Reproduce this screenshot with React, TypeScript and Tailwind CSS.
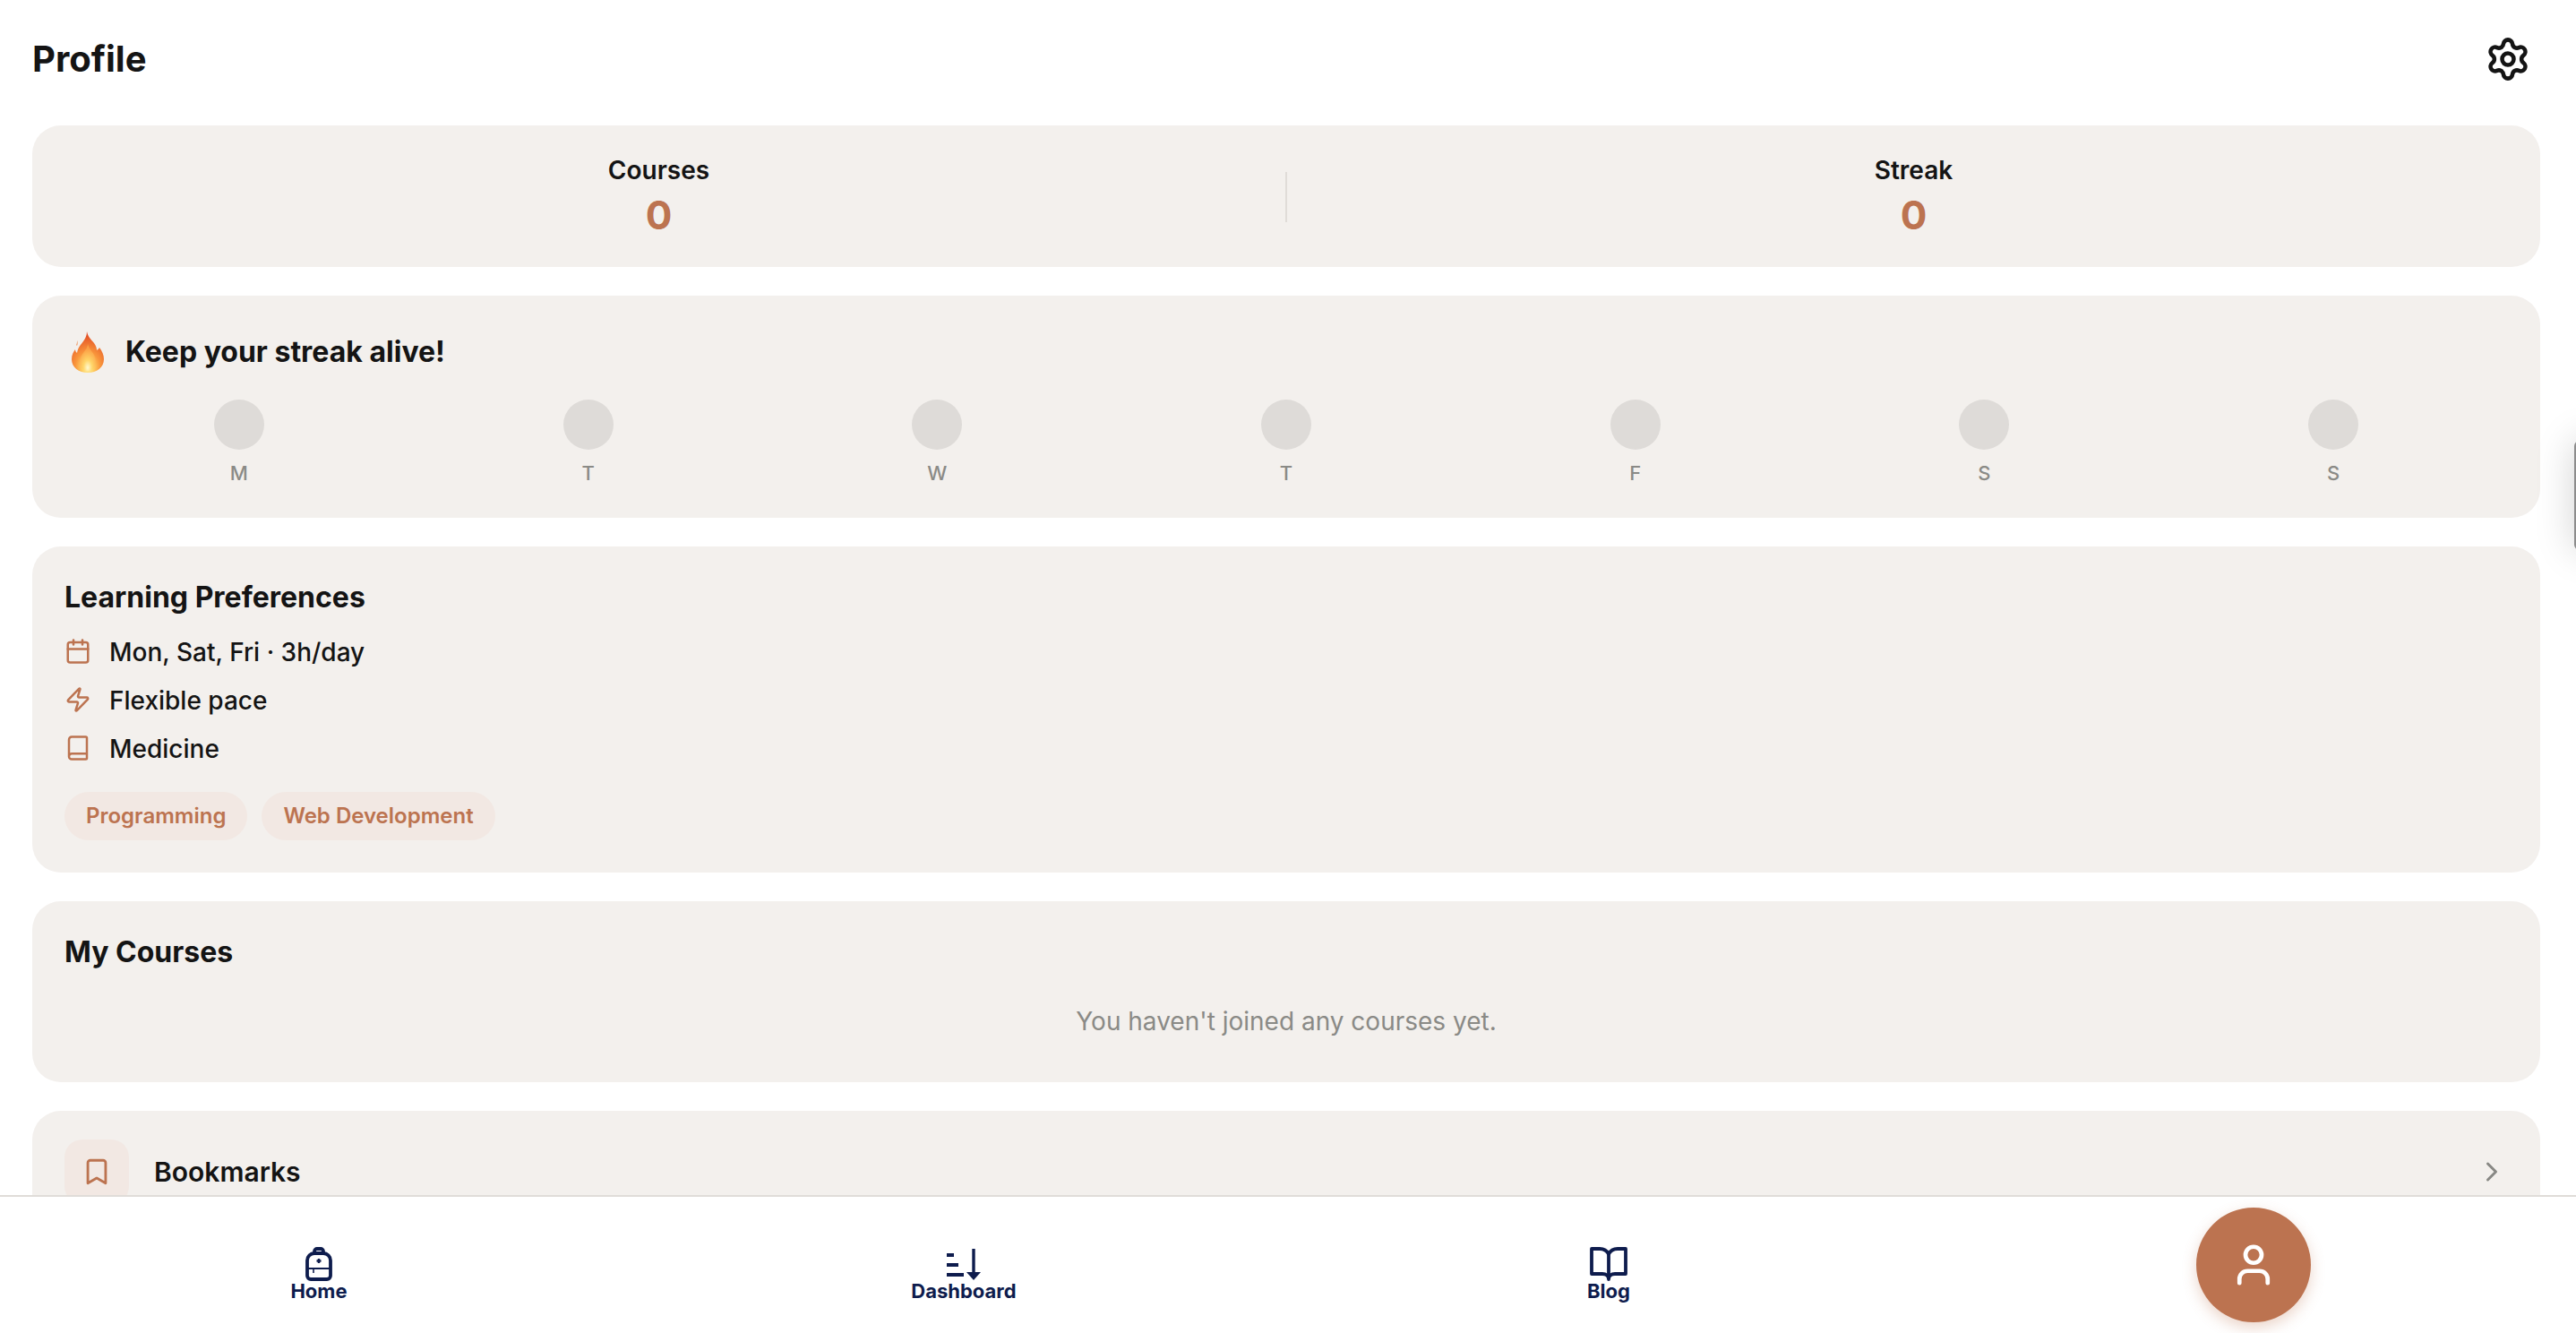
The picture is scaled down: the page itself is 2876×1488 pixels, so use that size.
import { Book, Bookmark, Calendar, ChevronRight, Settings, User, Zap } from "lucide-react"

const days = ["M", "T", "W", "T", "F", "S", "S"]

function Flame() {
  return (
    <svg viewBox="0 0 36 46" className="h-[46px] w-[36px] shrink-0">
      <defs>
        <radialGradient id="flame" cx="50%" cy="88%" r="80%">
          <stop offset="0%" stopColor="#fff6b8" />
          <stop offset="20%" stopColor="#ffd568" />
          <stop offset="48%" stopColor="#f9973c" />
          <stop offset="100%" stopColor="#e34f26" />
        </radialGradient>
        <radialGradient id="flameInner" cx="50%" cy="88%" r="70%">
          <stop offset="0%" stopColor="#fff9cf" />
          <stop offset="40%" stopColor="#ffd568" />
          <stop offset="100%" stopColor="#fb9f45" />
        </radialGradient>
      </defs>
      <path
        d="M17 0c1 6 5 9 8 13 2 3 3 5 3 8 2-1 3-3 3-3 3 4 5 8 5 13 0 9-8 15-18 15S0 40 0 31c0-5 2-8 4-11 0 2 1 3 2 4 1-6 4-9 7-13 2-3 4-6 4-11z"
        fill="url(#flame)"
      />
      <path d="M18 14c1 5 5 8 7 12 1 3 2 5 2 8 0 6-4 10-9 10s-9-4-9-10c0-4 2-7 4-10 2-3 5-6 5-10z" fill="url(#flameInner)" />
      <path d="M5 15c1-2 1-3 1-5 1 2 1 4 0 6z" fill="#f0a070" />
    </svg>
  )
}

function Backpack() {
  return (
    <svg viewBox="0 0 30 38" className="h-[38px] w-[30px]" fill="none" stroke="#0e1c4d" strokeWidth="3.8">
      <path d="M10 7V5a3 3 0 0 1 3-3h4a3 3 0 0 1 3 3v2" />
      <path d="M2 15a8 8 0 0 1 8-8h10a8 8 0 0 1 8 8v17a4 4 0 0 1-4 4H6a4 4 0 0 1-4-4z" />
      <path d="M3 24h24" strokeWidth="2" />
      <path d="M9 24v5" strokeWidth="1.6" />
      <path d="M15 13v5M12.5 15.5h5" strokeWidth="2.4" />
    </svg>
  )
}

function SortIcon() {
  return (
    <svg viewBox="0 0 38 36" className="h-[36px] w-[38px]" fill="none" stroke="#0e1c4d">
      <path d="M0 7h8M0 18h13M0 29h19" strokeWidth="4" />
      <path d="M30 0v28" strokeWidth="3.4" />
      <path d="M22 26h16l-8 9z" fill="#0e1c4d" stroke="none" />
    </svg>
  )
}

function OpenBook() {
  return (
    <svg viewBox="0 0 42 38" className="h-[38px] w-[42px]" fill="none" stroke="#0e1c4d" strokeWidth="3.8">
      <path d="M21 8c-2-4-6-6-10-6H2v28h12c4 0 7 2 7 6 0-4 3-6 7-6h12V2h-9c-4 0-8 2-10 6z" strokeLinejoin="round" />
      <path d="M21 8v28" />
    </svg>
  )
}

function PrefRow({ icon, text }: { icon: React.ReactNode; text: string }) {
  return (
    <div className="flex h-[54px] items-center gap-[20px]">
      <span className="-mt-[3px] flex w-[30px] justify-center text-[#bc7350]">{icon}</span>
      <span className="text-[28px] font-medium text-[#141414]">{text}</span>
    </div>
  )
}

export default function App() {
  return (
    <div className="relative flex h-screen flex-col overflow-hidden bg-white font-[Inter,sans-serif] text-[#141414]">
      {/* Scrolling content, cut off by the tab bar */}
      <div className="min-h-0 flex-1 overflow-hidden pr-10 pl-9">
        <div className="flex h-[140px] items-center justify-between pb-[9px]">
          <h1 className="text-[40px] font-bold">Profile</h1>
          <Settings size={52} strokeWidth={2.1} className="mr-[10px]" />
        </div>

        <div className="flex flex-col gap-8">
          {/* Stats */}
          <div className="flex h-[158px] items-center rounded-[32px] bg-[#f3f0ed]">
            <div className="flex flex-1 flex-col items-center">
              <span className="text-[28px] leading-[38px] font-semibold">Courses</span>
              <span className="mt-[3px] text-[44px] leading-[56px] font-bold text-[#bc7350]">0</span>
            </div>
            <div className="mt-[2px] h-[56px] w-[2px] bg-[#e0dcd8]" />
            <div className="flex flex-1 flex-col items-center">
              <span className="text-[28px] leading-[38px] font-semibold">Streak</span>
              <span className="mt-[3px] text-[44px] leading-[56px] font-bold text-[#bc7350]">0</span>
            </div>
          </div>

          {/* Streak */}
          <div className="h-[248px] rounded-[32px] bg-[#f3f0ed] px-9 pt-[39px]">
            <div className="flex h-[48px] items-center gap-[24px] pl-[8px]">
              <Flame />
              <span className="text-[32px] font-bold">Keep your streak alive!</span>
            </div>
            <div className="mt-[29px] grid grid-cols-7">
              {days.map((d, i) => (
                <div key={i} className="flex flex-col items-center gap-[12px]">
                  <div className="size-14 rounded-full bg-[#dedbd8]" />
                  <span className="text-[22px] leading-[28px] font-medium text-[#8a8a86]">{d}</span>
                </div>
              ))}
            </div>
          </div>

          {/* Preferences */}
          <div className="h-[364px] rounded-[32px] bg-[#f3f0ed] px-9 pt-[33px]">
            <h2 className="text-[32px] leading-[48px] font-bold">Learning Preferences</h2>
            <div className="mt-[10px] flex flex-col">
              <PrefRow icon={<Calendar size={34} strokeWidth={2} />} text="Mon, Sat, Fri · 3h/day" />
              <PrefRow icon={<Zap size={34} strokeWidth={2} />} text="Flexible pace" />
              <PrefRow icon={<Book size={34} strokeWidth={2} />} text="Medicine" />
            </div>
            <div className="mt-[21px] flex gap-4">
              <span className="flex h-[54px] items-center rounded-full bg-[#f2e8e3] px-6 text-[24px] font-semibold text-[#bc7350]">
                Programming
              </span>
              <span className="flex h-[54px] items-center rounded-full bg-[#f2e8e3] px-6 text-[24px] font-semibold text-[#bc7350]">
                Web Development
              </span>
            </div>
          </div>

          {/* My courses */}
          <div className="h-[202px] rounded-[32px] bg-[#f3f0ed] px-9 pt-[33px]">
            <h2 className="text-[32px] leading-[48px] font-bold">My Courses</h2>
            <p className="mt-[32px] text-center text-[28px] text-[#8a8a86]">You haven't joined any courses yet.</p>
          </div>

          {/* Bookmarks row */}
          <div className="flex items-center rounded-[32px] bg-[#f3f0ed] px-9 py-8">
            <div className="flex size-[72px] items-center justify-center rounded-[20px] bg-[#f2e8e3] text-[#bc7350]">
              <Bookmark size={34} strokeWidth={2} />
            </div>
            <span className="ml-7 flex-1 text-[30px] font-semibold">Bookmarks</span>
            <ChevronRight size={36} className="text-[#888884]" />
          </div>
        </div>
      </div>

      {/* Tab bar */}
      <nav className="h-[154px] shrink-0 border-t-2 border-[#e0dcd8] bg-white">
        <div className="-ml-1 grid w-[2880px] grid-cols-4">
          <div className="flex flex-col items-center justify-start pt-[56px]">
            <Backpack />
            <span className="-mt-[2px] text-[22px] leading-[26px] font-bold text-[#0e1c4d]">Home</span>
          </div>
          <div className="flex flex-col items-center justify-start pt-[58px]">
            <SortIcon />
            <span className="-mt-[2px] text-[22px] leading-[26px] font-bold text-[#0e1c4d]">Dashboard</span>
          </div>
          <div className="flex flex-col items-center justify-start pt-[56px]">
            <OpenBook />
            <span className="-mt-[2px] text-[22px] leading-[26px] font-bold text-[#0e1c4d]">Blog</span>
          </div>
          <div className="flex items-start justify-center pt-[12px]">
            <div className="flex size-32 items-center justify-center rounded-full bg-[#bc7350] text-white shadow-[0_6px_16px_rgba(188,115,80,0.3)]">
              <User size={54} strokeWidth={2.1} />
            </div>
          </div>
        </div>
      </nav>

      {/* Side drawer peeking in at the right edge */}
      <div className="absolute top-[492px] right-[-60px] h-[122px] w-[62px] rounded-l-[6px] bg-[#8c8c8c] shadow-[0_0_44px_rgba(0,0,0,0.18)]" />
    </div>
  )
}
